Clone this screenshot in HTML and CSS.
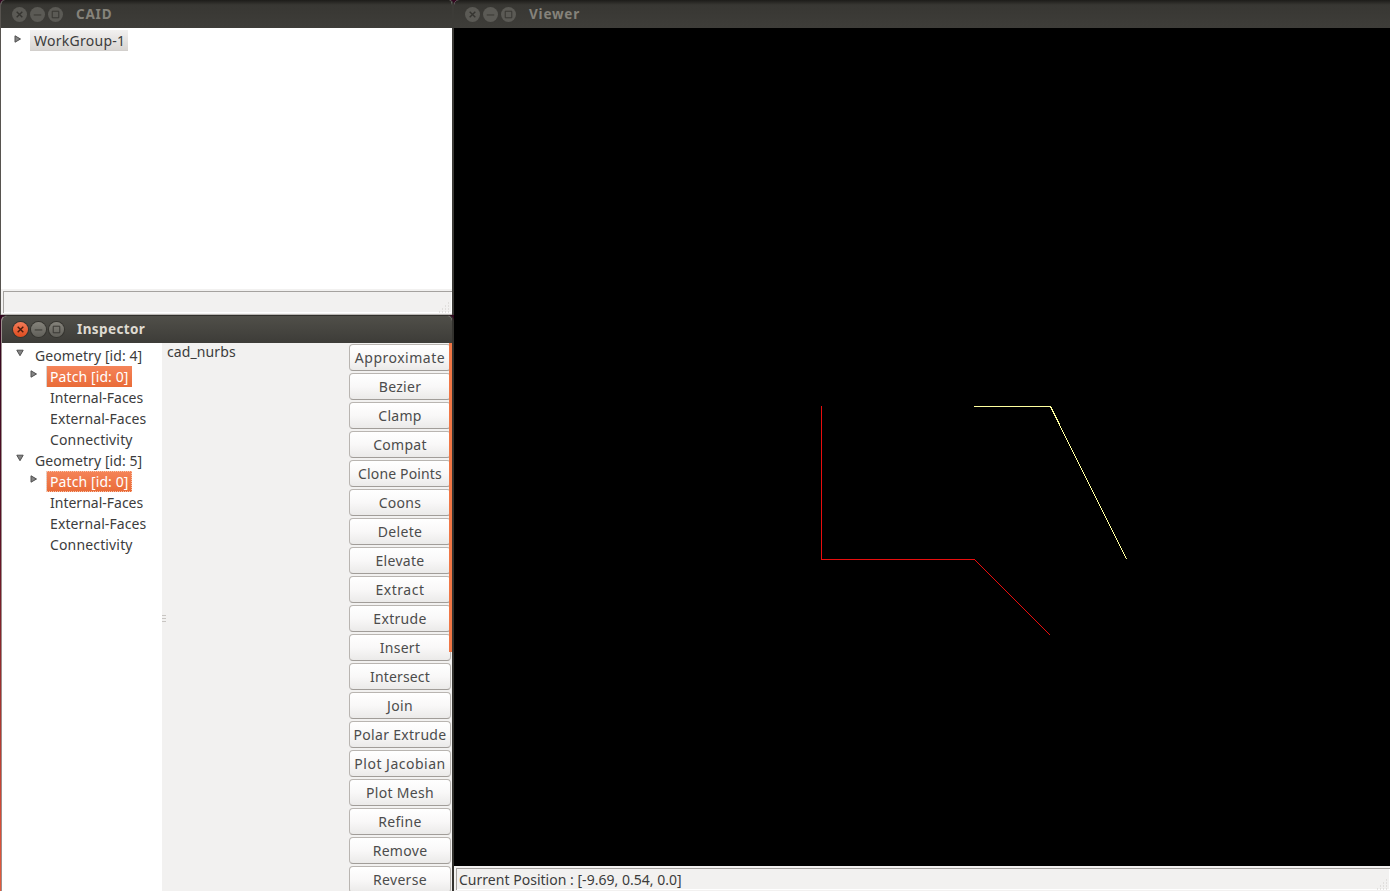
FILE: index.html
```
<!DOCTYPE html>
<html lang="en">
<head>
<meta charset="utf-8">
<title>CAID</title>
<link rel="stylesheet" href="styles.css">
</head>
<body>
<svg width="0" height="0" class="defs">
  <symbol id="close" viewBox="0 0 16 16"><path d="M5 5l6 6m0-6l-6 6" stroke-width="1.5"/></symbol>
  <symbol id="min" viewBox="0 0 16 16"><path d="M4 8.5h8"/></symbol>
  <symbol id="max" viewBox="0 0 16 16"><path d="M4.5 4.5h7v7h-7z"/></symbol>
  <symbol id="right" viewBox="0 0 8 8"><path d="M1 .8L6.5 4 1 7.2z" fill="#858585" stroke="#505050"/></symbol>
  <symbol id="down" viewBox="0 0 8 8"><path d="M.8 1.2h6.4L4 6.7z" fill="#858585" stroke="#505050"/></symbol>
  <symbol id="grip" viewBox="0 0 12 12"><path d="M9 1h1M6 4h1m2 0h1M3 7h1m2 0h1m2 0h1M0 10h1m2 0h1m2 0h1m2 0h1" stroke="#cfccc9" stroke-width="1"/></symbol>
</svg>
<main class="desktop">
  <section class="window caid">
    <header class="titlebar"><svg class="ctl"><use href="#close"/></svg><svg class="ctl"><use href="#min"/></svg><svg class="ctl"><use href="#max"/></svg><h1>CAID</h1></header>
    <div class="groups"><svg class="arrow"><use href="#right"/></svg><span class="group">WorkGroup-1</span></div>
    <footer class="status"><div class="field"><svg class="grip"><use href="#grip"/></svg></div></footer>
  </section>
  <section class="window viewer">
    <header class="titlebar"><svg class="ctl"><use href="#close"/></svg><svg class="ctl"><use href="#min"/></svg><svg class="ctl"><use href="#max"/></svg><h1>Viewer</h1></header>
    <svg class="canvas" viewBox="454 28 936 838">
      <path class="red" d="M821.5 406V559.5H974.5L1050 635"/>
      <path class="yellow" d="M974 406.5H1050.5L1126.5 559"/>
    </svg>
    <footer class="status"><div class="field"><span>Current Position : [-9.69, 0.54, 0.0]</span><svg class="grip"><use href="#grip"/></svg></div></footer>
  </section>
  <section class="window inspector">
    <header class="titlebar"><svg class="ctl"><use href="#close"/></svg><svg class="ctl"><use href="#min"/></svg><svg class="ctl"><use href="#max"/></svg><h1>Inspector</h1></header>
    <div class="panes">
      <div class="tree">
        <div class="node"><svg class="arrow"><use href="#down"/></svg><span class="geo">Geometry [id: 4]</span></div>
        <div class="node child"><svg class="arrow"><use href="#right"/></svg><span class="selected">Patch [id: 0]</span></div>
        <div class="node leaf">Internal-Faces</div>
        <div class="node leaf external">External-Faces</div>
        <div class="node leaf">Connectivity</div>
        <div class="node"><svg class="arrow"><use href="#down"/></svg><span class="geo">Geometry [id: 5]</span></div>
        <div class="node child"><svg class="arrow"><use href="#right"/></svg><span class="selected focused">Patch [id: 0]</span></div>
        <div class="node leaf">Internal-Faces</div>
        <div class="node leaf external">External-Faces</div>
        <div class="node leaf">Connectivity</div>
      </div>
      <div class="splitter"><i></i><i></i><i></i></div>
      <div class="kind">cad_nurbs</div>
      <div class="actions">
        <button class="wide">Approximate</button><button>Bezier</button><button>Clamp</button><button>Compat</button><button class="snug">Clone Points</button><button>Coons</button><button>Delete</button><button>Elevate</button><button class="wide">Extract</button><button>Extrude</button><button>Insert</button><button class="snug">Intersect</button><button>Join</button><button>Polar Extrude</button><button class="wide">Plot Jacobian</button><button>Plot Mesh</button><button>Refine</button><button>Remove</button><button>Reverse</button>
        <div class="scrollbar"></div>
      </div>
    </div>
  </section>
</main>
</body>
</html>
```
FILE: styles.css
```
* { box-sizing: border-box; }
body { margin: 0; overflow: hidden; font: 14px/21px "Noto Sans", "Open Sans", sans-serif; color: #3c3c3c; }
.defs { position: absolute; }
.desktop { position: relative; width: 1390px; height: 891px; overflow: hidden; background: linear-gradient(#32061f 0 36%, #5c1025 60%, #d84b35 92%, #e55c3c); }
.window { position: absolute; display: flex; flex-direction: column; overflow: hidden; }
.caid { left: 0; top: 0; width: 454px; height: 315px; border-right: 2px solid #3c3b37; border-left: 1px solid #57534f; background: #f2f1f0; border-radius: 5px 5px 0 0; }
.viewer { left: 454px; top: 0; width: 936px; height: 891px; background: #f2f1f0; border-top-left-radius: 5px; }
.inspector { left: 1px; top: 315px; width: 453px; height: 576px; border-left: 1px solid #9b8e8c; border-right: 2px solid #33322e; border-top: 1px solid #302f2b; background: #f2f1f0; border-radius: 6px 6px 0 0; }
.titlebar { flex: none; height: 28px; display: flex; align-items: center; gap: 3px; padding: 1px 0 0 11px; background: linear-gradient(#1d1c19, #383733 5px, #3e3d39); color: #85827a; }
.titlebar h1 { margin: 0 0 0 10px; padding-bottom: 1px; font: bold 13.5px/20px "Noto Sans", sans-serif; letter-spacing: .8px; }
.ctl { width: 15px; height: 15px; border-radius: 50%; background: #5b5a55; fill: none; stroke: #353430; }
.inspector .titlebar { height: 27px; padding-top: 0; padding-left: 11px; background: linear-gradient(#504f49, #3d3c38); color: #dfdbd2; }
.inspector h1 { letter-spacing: .4px; }
.inspector .ctl { background: linear-gradient(#85837b, #605f59); box-shadow: 0 0 0 1px #35342f; }
.inspector .ctl:first-child { background: linear-gradient(#f47b58, #df4c1f); stroke: #4a1b0c; }
.groups { flex: 1; display: flex; align-items: flex-start; padding: 2px 0 0 13px; background: #fff; }
.arrow { flex: none; width: 8px; height: 8px; }
.groups .arrow { margin-top: 5px; }
.group { width: 98px; height: 21px; margin-left: 8px; padding-left: 4px; border: solid #d2cfcc; border-width: 0 0 1px; background: linear-gradient(#f2f1f0, #d8d5d2); white-space: nowrap; letter-spacing: .27px; }
.status { flex: none; height: 26px; padding: 2px 0 1px 2px; border-bottom: 1px solid #bbb8b5; }
.field { height: 100%; display: flex; padding-left: 2px; border: 1px solid #a5a29f; border-width: 1px 0 0 1px; box-shadow: inset -1px -1px #fff; white-space: nowrap; }
.grip { flex: none; width: 12px; height: 12px; margin: 10px 1px 0 auto; }
.canvas { width: 936px; height: 838px; background: #000; flex: none; }
.canvas path { fill: none; stroke-width: 1; shape-rendering: crispEdges; }
.red { stroke: #e80d0d; }
.yellow { stroke: #ffff9f; }
.viewer .status { height: 25px; border: 0; padding: 2px 0 1px 2px; }
.viewer .field span { line-height: 21px; letter-spacing: .02px; }
.panes { flex: 1; min-height: 0; display: flex; }
.tree { width: 160px; padding-top: 2px; background: #fff; flex: none; }
.node { height: 21px; display: flex; align-items: flex-start; padding-left: 14px; white-space: nowrap; }
.node .arrow { margin-top: 4px; margin-left: -.5px; }
.geo { margin-left: 11.5px; letter-spacing: .08px; }
.child { padding-left: 28px; }
.leaf { padding-left: 48px; }
.external { letter-spacing: .1px; }
.leaf:nth-child(5n) { letter-spacing: .15px; }
.selected { width: 86px; height: 21px; margin-left: 8.5px; padding-left: 3px; border-left: 1px solid #d8d5d2; background: linear-gradient(#f58459, #e96b38); color: #fff; letter-spacing: .1px; }
.focused { outline: 1px dotted #f9c3a9; outline-offset: -1px; }
.splitter { width: 4px; display: flex; flex-direction: column; gap: 2px; margin-top: 272px; }
.splitter i { height: 1px; background: #c8c5c2; }
.kind { flex: 1; padding-left: 1px; line-height: 18px; letter-spacing: .1px; }
.actions { position: relative; flex: none; width: 103px; padding: 1px 1px 0 0; display: flex; flex-direction: column; gap: 2px; }
.actions button { flex: none; height: 27px; padding: 0; border: 1px solid #b9b5b1; border-bottom-color: #a19d99; border-radius: 4px; background: linear-gradient(#fff, #f9f8f8 50%, #ebeae9); color: #4c4c4c; font: inherit; line-height: 24px; letter-spacing: .3px; white-space: nowrap; }
.actions .wide { letter-spacing: .5px; }
.actions .snug { letter-spacing: .15px; }
.scrollbar { position: absolute; right: 0; top: 0; width: 3px; height: 309px; background: #f07746; }
```
